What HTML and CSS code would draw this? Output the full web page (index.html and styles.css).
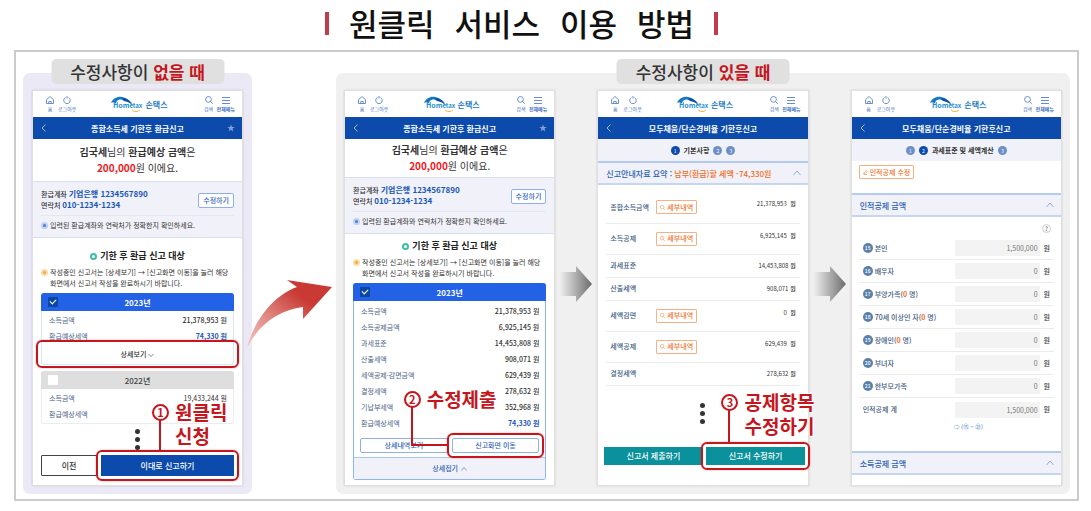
FILE: index.html
```html
<!DOCTYPE html>
<html lang="ko">
<head>
    <meta charset="UTF-8">
    <meta name="viewport" content="width=device-width, initial-scale=1">
    <title>원클릭 서비스 이용 방법</title>
    <link rel="stylesheet" href="styles.css">
</head>
<body>
    <!-- shared icons -->
    <svg class="sprite" aria-hidden="true">
        <symbol id="i-home" viewBox="0 0 16 16"><path d="M1 7.500 8 1l7 6.500V15H1zM5.500 15v-4h5v4" fill="none" stroke="currentColor" stroke-width="1.500"/></symbol>
        <symbol id="i-power" viewBox="0 0 16 16"><path d="M5 3a6.500 6.500 0 1 0 6 0M8 0v5" fill="none" stroke="currentColor" stroke-width="1.500"/></symbol>
        <symbol id="i-search" viewBox="0 0 16 16"><path d="M7 1a5.800 5.800 0 1 0 0 11.600a5.800 5.800 0 1 0 0-11.600M11 11l4.500 4.500" fill="none" stroke="currentColor" stroke-width="1.500"/></symbol>
        <symbol id="i-menu" viewBox="0 0 16 16"><path d="M0 3h16M0 9h16M0 15h16" fill="none" stroke="currentColor" stroke-width="1.600"/></symbol>
        <symbol id="i-up" viewBox="0 0 16 16"><path d="M1 12 8 4l7 8" fill="none" stroke="currentColor" stroke-width="1.600"/></symbol>
        <symbol id="i-down" viewBox="0 0 16 16"><path d="M1 5l7 7 7-7" fill="none" stroke="currentColor" stroke-width="1.600"/></symbol>
        <symbol id="i-back" viewBox="0 0 16 16"><path d="M11 1 4 8l7 7" fill="none" stroke="currentColor" stroke-width="1.800"/></symbol>
        <symbol id="i-star" viewBox="0 0 16 16"><path d="M8 1l2 5h5.500l-4.500 3.500L12.500 15 8 11.500 3.500 15 5 9.500.5 6H6z" fill="currentColor"/></symbol>
        <symbol id="i-pen" viewBox="0 0 16 16"><path d="M3 9 11 1l3 3-8 8-4 1zM3 15h10" fill="none" stroke="currentColor" stroke-width="1.800"/></symbol>
        <symbol id="i-next" viewBox="0 0 32 36">
            <path d="M0 6h16V0l16 18-16 18v-6H0z" fill="url(#grayFade)"/>
        </symbol>
        <symbol id="i-logo" viewBox="0 0 32 16">
            <path d="M0 7C2 2 7 0 11 1c5 1 9 4 11 8-3-3-6-4-9-4-2-2-5-2-7 0L4 8C4 6 2 6 0 7z" fill="#1479c4"/>
            <path d="M11 2c5 0 8 3 10 7-3-3-6-4-8-4z" fill="#0d4fa8"/>
            <path d="M21 14c2 2 6 2 8 0" fill="none" stroke="#f2b441" stroke-width="1"/>
        </symbol>
        <defs>
            <linearGradient id="grayFade"><stop offset="0" stop-color="#eeeeee"/><stop offset="1" stop-color="#6c6c6c"/></linearGradient>
        </defs>
    </svg>

    <h1 class="title"><span>원클릭</span> <span>서비스</span> <span>이용</span> <span>방법</span></h1>

    <main class="frame">
        <section class="panel panel-none">
            <h2 class="panel-label">수정사항이 <strong>없을 때</strong></h2>
            <div class="phone">
                <header class="phone-top">
                    <nav>
                        <button><svg><use href="#i-home"/></svg>홈</button>
                        <button><svg><use href="#i-power"/></svg>로그아웃</button>
                    </nav>
                    <a class="logo" href="#"><svg viewBox="0 0 32 16"><use href="#i-logo"/><text x="2" y="12">Hom<tspan class="logo-tax">etax</tspan></text></svg>손택스</a>
                    <nav class="right">
                        <button><svg><use href="#i-search"/></svg>검색</button>
                        <button class="strong"><svg><use href="#i-menu"/></svg>전체메뉴</button>
                    </nav>
                </header>
                <div class="phone-title">
                    <svg><use href="#i-back"/></svg>
                    <h3>종합소득세 기한후 환급신고</h3>
                    <svg class="star"><use href="#i-star"/></svg>
                </div>
                <p class="refund roomy"><b>김국세</b>님의 <b>환급예상 금액</b>은<br><b class="amount">200,000</b>원 이에요.</p>
                <div class="account">
                    <div class="account-row">
                        <p>환급계좌 <b>기업은행 1234567890</b><br>연락처 <b>010-1234-1234</b></p>
                        <button class="btn-line">수정하기</button>
                    </div>
                    <p class="note blue">입력된 환급계좌와 연락처가 정확한지 확인하세요.</p>
                </div>
                <div class="target roomy">
                    <h4>기한 후 환급 신고 대상</h4>
                    <p class="note orange">작성중인 신고서는 [상세보기] → [신고화면 이동]을 눌러 해당<br>화면에서 신고서 작성을 완료하시기 바랍니다.</p>
                    <div class="card">
                        <div class="card-head">
                            <input type="checkbox" id="year-2023" checked>
                            <label for="year-2023">2023년</label>
                        </div>
                        <table>
                            <tr><th>소득금액</th><td>21,378,953 원</td></tr>
                            <tr><th>환급예상세액</th><td class="total">74,330 원</td></tr>
                        </table>
                        <div class="marked marked-wide">
                            <button class="btn-more">상세보기 <svg><use href="#i-down"/></svg></button>
                        </div>
                    </div>
                    <div class="card card-off">
                        <div class="card-head">
                            <input type="checkbox" id="year-2022">
                            <label for="year-2022">2022년</label>
                        </div>
                        <table>
                            <tr><th>소득금액</th><td>19,433,244 원</td></tr>
                            <tr><th>환급예상세액</th><td></td></tr>
                        </table>
                    </div>
                </div>
                <div class="dots"><i></i><i></i><i></i></div>
                <div class="actions">
                    <button class="btn-prev">이전</button>
                    <div class="marked">
                        <button class="btn-submit">이대로 신고하기</button>
                        <div class="callout callout-1"><span class="num">1</span><p>원클릭<br>신청</p></div>
                    </div>
                </div>
            </div>
        </section>

        <svg class="swoosh" viewBox="0 0 90 72" aria-hidden="true">
            <defs>
                <linearGradient id="redFade" x1="0" y1="1" x2="0.700" y2="0.300">
                    <stop offset="0" stop-color="#f6c9c5"/>
                    <stop offset="0.500" stop-color="#e08983"/>
                    <stop offset="1" stop-color="#c93a34"/>
                </linearGradient>
            </defs>
            <path d="M1 69C7 44 26 17 51 8L41 1 86 8 57 40V28C33 31 13 45 1 69z" fill="url(#redFade)"/>
        </svg>

        <section class="panel panel-edit">
            <h2 class="panel-label">수정사항이 <strong>있을 때</strong></h2>

            <div class="phone">
                <header class="phone-top">
                    <nav>
                        <button><svg><use href="#i-home"/></svg>홈</button>
                        <button><svg><use href="#i-power"/></svg>로그아웃</button>
                    </nav>
                    <a class="logo" href="#"><svg viewBox="0 0 32 16"><use href="#i-logo"/><text x="2" y="12">Hom<tspan class="logo-tax">etax</tspan></text></svg>손택스</a>
                    <nav class="right">
                        <button><svg><use href="#i-search"/></svg>검색</button>
                        <button class="strong"><svg><use href="#i-menu"/></svg>전체메뉴</button>
                    </nav>
                </header>
                <div class="phone-title">
                    <svg><use href="#i-back"/></svg>
                    <h3>종합소득세 기한후 환급신고</h3>
                    <svg class="star"><use href="#i-star"/></svg>
                </div>
                <p class="refund"><b>김국세</b>님의 <b>환급예상 금액</b>은<br><b class="amount">200,000</b>원 이에요.</p>
                <div class="account">
                    <div class="account-row">
                        <p>환급계좌 <b>기업은행 1234567890</b><br>연락처 <b>010-1234-1234</b></p>
                        <button class="btn-line">수정하기</button>
                    </div>
                    <p class="note blue">입력된 환급계좌와 연락처가 정확한지 확인하세요.</p>
                </div>
                <div class="target">
                    <h4>기한 후 환급 신고 대상</h4>
                    <p class="note orange">작성중인 신고서는 [상세보기] → [신고화면 이동]을 눌러 해당<br>화면에서 신고서 작성을 완료하시기 바랍니다.</p>
                    <div class="card card-open">
                        <div class="card-head">
                            <input type="checkbox" id="detail-2023" checked>
                            <label for="detail-2023">2023년</label>
                        </div>
                        <table>
                            <tr><th>소득금액</th><td>21,378,953 원</td></tr>
                            <tr><th>소득공제금액</th><td>6,925,145 원</td></tr>
                            <tr><th>과세표준</th><td>14,453,808 원</td></tr>
                            <tr><th>산출세액</th><td>908,071 원</td></tr>
                            <tr><th>세액공제·감면금액</th><td>629,439 원</td></tr>
                            <tr><th>결정세액</th><td>278,632 원</td></tr>
                            <tr><th>기납부세액</th><td>352,968 원</td></tr>
                            <tr><th>환급예상세액</th><td class="total">74,330 원</td></tr>
                        </table>
                        <div class="card-buttons">
                            <button class="btn-line">상세내역보기</button>
                            <div class="marked">
                                <button class="btn-line">신고화면 이동</button>
                                <div class="callout callout-2"><span class="num">2</span><p>수정제출</p></div>
                            </div>
                        </div>
                        <button class="btn-fold">상세접기 <svg><use href="#i-up"/></svg></button>
                    </div>
                </div>
            </div>

            <svg class="next" aria-hidden="true"><use href="#i-next"/></svg>

            <div class="phone">
                <header class="phone-top">
                    <nav>
                        <button><svg><use href="#i-home"/></svg>홈</button>
                        <button><svg><use href="#i-power"/></svg>로그아웃</button>
                    </nav>
                    <a class="logo" href="#"><svg viewBox="0 0 32 16"><use href="#i-logo"/><text x="2" y="12">Hom<tspan class="logo-tax">etax</tspan></text></svg>손택스</a>
                    <nav class="right">
                        <button><svg><use href="#i-search"/></svg>검색</button>
                        <button class="strong"><svg><use href="#i-menu"/></svg>전체메뉴</button>
                    </nav>
                </header>
                <div class="phone-title">
                    <svg><use href="#i-back"/></svg>
                    <h3>모두채움/단순경비율 기한후신고</h3>
                </div>
                <div class="steps"><span class="step on">1</span><b>기본사항</b><span class="step">2</span><span class="step">3</span></div>
                <div class="fold"><span>신고안내자료 요약 : <em>납부(환급)할 세액 -74,330원</em></span><svg><use href="#i-up"/></svg></div>
                <table class="calc">
                    <tr class="tall"><th>종합소득금액</th><td><button class="btn-detail"><svg><use href="#i-search"/></svg>세부내역</button></td><td>21,378,953 &nbsp;<b>원</b></td></tr>
                    <tr class="tall"><th>소득공제</th><td><button class="btn-detail"><svg><use href="#i-search"/></svg>세부내역</button></td><td>6,925,145 &nbsp;<b>원</b></td></tr>
                    <tr><th>과세표준</th><td></td><td>14,453,808 <b>원</b></td></tr>
                    <tr><th>산출세액</th><td></td><td>908,071 <b>원</b></td></tr>
                    <tr class="tall"><th>세액감면</th><td><button class="btn-detail"><svg><use href="#i-search"/></svg>세부내역</button></td><td>0 &nbsp;<b>원</b></td></tr>
                    <tr class="tall"><th>세액공제</th><td><button class="btn-detail"><svg><use href="#i-search"/></svg>세부내역</button></td><td>629,439 &nbsp;<b>원</b></td></tr>
                    <tr><th>결정세액</th><td></td><td>278,632 <b>원</b></td></tr>
                </table>
                <div class="dots"><i></i><i></i><i></i></div>
                <div class="actions actions-teal">
                    <button class="btn-teal">신고서 제출하기</button>
                    <div class="marked">
                        <button class="btn-teal">신고서 수정하기</button>
                        <div class="callout callout-3"><span class="num">3</span><p>공제항목<br>수정하기</p></div>
                    </div>
                </div>
            </div>

            <svg class="next" aria-hidden="true"><use href="#i-next"/></svg>

            <div class="phone">
                <header class="phone-top">
                    <nav>
                        <button><svg><use href="#i-home"/></svg>홈</button>
                        <button><svg><use href="#i-power"/></svg>로그아웃</button>
                    </nav>
                    <a class="logo" href="#"><svg viewBox="0 0 32 16"><use href="#i-logo"/><text x="2" y="12">Hom<tspan class="logo-tax">etax</tspan></text></svg>손택스</a>
                    <nav class="right">
                        <button><svg><use href="#i-search"/></svg>검색</button>
                        <button class="strong"><svg><use href="#i-menu"/></svg>전체메뉴</button>
                    </nav>
                </header>
                <div class="phone-title">
                    <svg><use href="#i-back"/></svg>
                    <h3>모두채움/단순경비율 기한후신고</h3>
                </div>
                <div class="steps"><span class="step">1</span><span class="step on">2</span><b>과세표준 및 세액계산</b><span class="step">3</span></div>
                <div class="edit-bar"><button class="btn-detail"><svg><use href="#i-pen"/></svg>인적공제 수정</button></div>
                <div class="fold"><span>인적공제 금액</span><svg><use href="#i-up"/></svg></div>
                <div class="form">
                    <button class="help">?</button>
                    <div class="field"><label for="f15"><i>15</i>본인</label><input id="f15" type="text" value="1,500,000" readonly><b>원</b></div>
                    <div class="field"><label for="f16"><i>16</i>배우자</label><input id="f16" type="text" value="0" readonly><b>원</b></div>
                    <div class="field"><label for="f17"><i>17</i>부양가족(<em>0</em> 명)</label><input id="f17" type="text" value="0" readonly><b>원</b></div>
                    <div class="field"><label for="f18"><i>18</i>70세 이상인 자(<em>0</em> 명)</label><input id="f18" type="text" value="0" readonly><b>원</b></div>
                    <div class="field"><label for="f19"><i>19</i>장애인(<em>0</em> 명)</label><input id="f19" type="text" value="0" readonly><b>원</b></div>
                    <div class="field"><label for="f20"><i>20</i>부녀자</label><input id="f20" type="text" value="0" readonly><b>원</b></div>
                    <div class="field"><label for="f21"><i>21</i>한부모가족</label><input id="f21" type="text" value="0" readonly><b>원</b></div>
                    <div class="field"><label for="fsum">인적공제 계</label><input id="fsum" type="text" value="1,500,000" readonly><b>원</b></div>
                    <p class="sum-note">⇨ (⑮ ~ ㉑)</p>
                </div>
                <div class="fold"><span>소득공제 금액</span><svg><use href="#i-up"/></svg></div>
            </div>
        </section>
    </main>
</body>
</html>
```

FILE: styles.css
```css
*, *::before, *::after {
    box-sizing: border-box;
}
body {
    margin: 0;
    padding: 0 12px 12px 14px;
    background: #fff;
    color: #333;
    font-family: "Noto Sans CJK KR", "Noto Sans", sans-serif;
    font-size: 7px;
    line-height: 11px;
}
h1, h2, h3, h4, p {
    margin: 0;
}
button, input {
    margin: 0;
    padding: 0;
    border: 0;
    background: none;
    color: inherit;
    font: inherit;
    white-space: nowrap;
}
button {
    cursor: pointer;
}
em, i {
    font-style: normal;
}
a {
    color: inherit;
    text-decoration: none;
}
svg {
    display: block;
    flex: none;
    width: 8px;
    height: 8px;
}
.sprite {
    position: absolute;
    width: 0;
    height: 0;
}

/* page title */
.title {
    display: flex;
    justify-content: center;
    align-items: center;
    gap: 20px;
    height: 50px;
    padding-bottom: 4px;
    margin-right: 50px;
    color: #111;
    font-size: 31px;
    font-weight: 500;
    line-height: 46px;
}
.title::before,
.title::after {
    content: "";
    width: 4px;
    height: 23px;
    background: #c23b4b;
}

/* frame and panels */
.frame {
    display: grid;
    grid-template-columns: 229fr 84px 734fr;
    padding: 21px 7px 5px;
    border: 2px solid #cbcbcb;
}
.panel {
    display: flex;
    position: relative;
    padding: 17px 8px 8px;
    border-radius: 7px;
    background: #f0f0f0;
}
.panel-none {
    padding: 17px 9px 8px;
    background: #ebe9f6;
}
.panel-label {
    position: absolute;
    top: -14px;
    left: 50%;
    transform: translateX(-50%);
    width: 173px;
    border-radius: 5px;
    background: #e0e0e0;
    color: #333;
    font-size: 17px;
    font-weight: 500;
    line-height: 25px;
    text-align: center;
    white-space: nowrap;
}
.panel-label strong {
    color: #c5161d;
    font-weight: 700;
}
.next {
    align-self: center;
    width: 32px;
    height: 36px;
    margin: 0 5px 8px;
}
.swoosh {
    align-self: start;
    z-index: 1;
    width: 90px;
    height: 72px;
    margin: 206px 0 0 -6px;
}

/* phone */
.phone {
    display: flex;
    flex: 1;
    flex-direction: column;
    min-width: 0;
    border: 1px solid #e0e0e0;
    background: #fff;
    box-shadow: 0 0 2px rgba(0, 0, 0, 0.15);
}
.phone-top {
    display: grid;
    grid-template-columns: 1fr auto 1fr;
    align-items: center;
    height: 26px;
    padding: 0 7px 0 11px;
    color: #3f6fc0;
    font-size: 5px;
    line-height: 7px;
}
.phone-top nav {
    display: flex;
    gap: 2px;
}
.phone-top nav.right {
    justify-content: flex-end;
}
.phone-top button {
    display: flex;
    flex-direction: column;
    align-items: center;
    gap: 1px;
    min-width: 12px;
}
.phone-top .strong {
    font-weight: 700;
}
.logo {
    display: flex;
    align-items: center;
    gap: 2px;
    color: #1b79bd;
    font-size: 8px;
    font-weight: 700;
}
.logo svg {
    width: 32px;
    height: 16px;
}
.logo text {
    fill: #1f8fd0;
    font-size: 7px;
}
.logo .logo-tax {
    font-size: 6px;
}
.phone-title {
    display: flex;
    align-items: center;
    height: 22px;
    padding: 0 7px;
    background: #0c4bab;
    color: #fff;
}
.phone-title h3 {
    flex: 1;
    font-size: 8px;
    font-weight: 700;
    text-align: center;
}
.phone-title svg {
    color: #b9cdee;
}
.phone-title h3:last-child {
    padding-right: 8px;
}
.phone-title .star {
    color: #7ea0d8;
}

/* refund summary */
.refund {
    padding: 3px 0;
    border-bottom: 1px solid #d9dfee;
    font-size: 10px;
    line-height: 16px;
    text-align: center;
}
.refund.roomy {
    padding: 5px 0;
}
.refund .amount {
    color: #f0181e;
}
.account {
    padding: 7px 8px 6px;
    border-bottom: 1px solid #d5e0f2;
    background: #f1f2f9;
}
.account-row {
    display: flex;
    justify-content: space-between;
    align-items: center;
    padding-bottom: 4px;
    margin-bottom: 4px;
    border-bottom: 1px solid #e4e7f0;
    font-weight: 500;
}
.account-row b {
    color: #1a56b8;
    font-size: 8px;
    line-height: 8px;
}
.btn-line {
    height: 15px;
    padding: 0 4px;
    border: 1px solid #8fb0e4;
    border-radius: 2px;
    background: #fff;
    color: #3465b8;
    font-weight: 500;
}
.note {
    position: relative;
    padding-left: 9px;
    white-space: nowrap;
}
.note::before {
    content: "";
    position: absolute;
    top: 2px;
    left: 0;
    width: 7px;
    height: 7px;
    border: 2px solid #bcd0f2;
    border-radius: 50%;
    background: #4b7fd8;
}
.note.orange::before {
    border-color: #fbdba6;
    background: #f2a93b;
}

/* refund target cards */
.target {
    padding: 5px 8px;
}
.target.roomy {
    padding: 11px 8px 0;
}
.target h4 {
    display: flex;
    justify-content: center;
    align-items: center;
    gap: 3px;
    margin-bottom: 4px;
    color: #222;
    font-size: 9px;
    font-weight: 700;
    line-height: 14px;
}
.target h4::before {
    content: "";
    width: 7px;
    height: 7px;
    border: 2px solid #3dbcaa;
    border-radius: 50%;
}
.card {
    margin-top: 4px;
    border: 1px solid #dbe5f7;
    border-top: 0;
    border-radius: 3px;
}
.card-open {
    border-color: #8fb3f3;
}
.card-off {
    margin-top: 6px;
    border-color: #ececec;
}
.card-head {
    display: flex;
    align-items: center;
    height: 18px;
    padding: 0 17px 0 7px;
    margin: 0 -1px;
    border-radius: 3px 3px 0 0;
    background: #2361e6;
    color: #fff;
    font-size: 8px;
    font-weight: 700;
}
.card-head input {
    appearance: none;
    width: 10px;
    height: 10px;
    border-radius: 1px;
    background: #fff;
}
.card-head input:checked {
    background: #0c479f;
}
.card-head input:checked::before {
    content: "";
    display: block;
    width: 6px;
    height: 4px;
    margin: 2px;
    border: solid #fff;
    border-width: 0 0 1px 1px;
    transform: rotate(-45deg);
}
.card-head label {
    flex: 1;
    text-align: center;
}
.card-off .card-head {
    background: #dedede;
    color: #444;
    font-weight: 500;
}
table {
    width: 100%;
    border-collapse: collapse;
}
th, td {
    padding: 0;
    text-align: left;
}
.card table {
    margin: 1px 0;
}
.card-open table {
    margin: 2px 0 3px;
}
.card tr {
    height: 16px;
}
.card th {
    padding-left: 7px;
    color: #4d6488;
    font-weight: 400;
}
.card td {
    padding-right: 6px;
    font-weight: 500;
    text-align: right;
}
.card-off td {
    font-weight: 400;
}
.card td.total {
    color: #1a56b8;
    font-weight: 700;
}
.btn-more {
    display: flex;
    justify-content: center;
    align-items: center;
    gap: 2px;
    width: 100%;
    height: 19px;
    color: #333;
    font-weight: 500;
}
.btn-more svg, .btn-fold svg {
    width: 6px;
    height: 6px;
}
.card-buttons {
    display: grid;
    grid-template-columns: 1fr 1fr;
    gap: 4px;
    padding: 4px 6px;
}
.card-buttons .btn-line {
    display: block;
    width: 100%;
}
.btn-fold {
    display: flex;
    justify-content: center;
    align-items: center;
    gap: 3px;
    width: 100%;
    height: 22px;
    border-top: 1px solid #a9c4f5;
    background: #f1f2f9;
    color: #3465b8;
    font-weight: 500;
}
.dots {
    display: flex;
    flex-direction: column;
    align-items: center;
    gap: 3px;
    padding: 5px 0;
}
.dots i {
    width: 5px;
    height: 5px;
    border-radius: 50%;
    background: #333;
}
.actions {
    display: grid;
    grid-template-columns: 56px 1fr;
    gap: 4px;
    padding: 0 8px 6px;
    font-size: 8px;
    font-weight: 500;
}
.actions button {
    display: block;
    width: 100%;
    height: 21px;
}
.btn-prev {
    border: 1px solid #444;
    border-radius: 1px;
}
.btn-submit {
    background: #0c4bab;
    color: #fff;
}
.actions-teal {
    grid-template-columns: 1fr 1fr;
    padding: 18px 3px 17px 6px;
}
.actions .btn-teal {
    height: 18px;
    background: #0a919b;
    color: #fff;
}

/* red marks and callouts */
.marked {
    position: relative;
}
.marked::after {
    content: "";
    position: absolute;
    inset: -5px;
    border: 2px solid #c5161d;
    border-radius: 6px;
    box-shadow: 0 0 2px rgba(197, 22, 29, 0.4);
    pointer-events: none;
}
.marked-wide::after {
    inset: -5px -6px -4px;
}
.callout {
    display: flex;
    position: absolute;
    z-index: 2;
    gap: 6px;
    color: #c5161d;
    font-size: 19px;
    font-weight: 700;
    line-height: 24px;
    white-space: nowrap;
    text-shadow: 0 0 2px #fff, 1px 1px 1px #fff, -1px -1px 1px #fff;
}
.callout::before {
    content: "";
    position: absolute;
    top: 20px;
    left: 7px;
    border-left: 2px solid #c5161d;
}
.num {
    width: 17px;
    height: 17px;
    margin-top: 4px;
    border: 2px solid #c5161d;
    border-radius: 50%;
    background: #fff;
    font-size: 11px;
    line-height: 13px;
    text-align: center;
}
.callout-1 {
    bottom: 28px;
    left: 51px;
}
.callout-1::before {
    height: 31px;
}
.callout-2 {
    bottom: 42px;
    left: -48px;
}
.callout-2::before {
    width: 37px;
    height: 39px;
    border-bottom: 2px solid #c5161d;
}
.callout-3 {
    bottom: 27px;
    left: 15px;
}
.callout-3::before {
    height: 33px;
}

/* calculation screens */
.steps {
    display: flex;
    justify-content: center;
    align-items: center;
    gap: 4px;
    height: 22px;
    background: #f1f2f9;
    color: #333;
}
.step {
    width: 9px;
    height: 9px;
    border-radius: 50%;
    background: #6d8fc6;
    color: #fff;
    font-size: 5px;
    line-height: 9px;
    text-align: center;
}
.step.on {
    background: #0c4bab;
}
.fold {
    display: flex;
    justify-content: space-between;
    align-items: center;
    height: 24px;
    padding: 0 7px 0 8px;
    border-top: 2px solid #b5cbee;
    border-bottom: 2px solid #c6d6ee;
    background: #f1f2f9;
    color: #2c5fb6;
    font-size: 8px;
    font-weight: 500;
    white-space: nowrap;
}
.fold svg {
    color: #6f95d6;
}
.fold em, .field em {
    color: #f26a21;
}
.field em {
    font-weight: 700;
}
.calc {
    width: auto;
    margin: 7px 8px 12px;
}
.calc tr {
    height: 23px;
    border-bottom: 1px solid #ebebeb;
}
.calc .tall {
    height: 31px;
}
.calc th {
    width: 50px;
    padding-left: 4px;
    color: #405a80;
    font-weight: 500;
}
.calc td:last-child {
    padding-right: 4px;
    font-size: 6px;
    text-align: right;
}
.calc .tall td:last-child {
    padding-bottom: 7px;
}
.calc b {
    font-weight: 500;
}
.btn-detail {
    display: flex;
    align-items: center;
    gap: 2px;
    height: 14px;
    padding: 0 3px;
    border: 1px solid #f5b183;
    border-radius: 1px;
    background: #fff;
    color: #f2711f;
    font-weight: 500;
}
.btn-detail svg {
    width: 5px;
    height: 5px;
}
.edit-bar {
    padding: 4px 7px 14px;
}
.form {
    flex: 1;
    padding: 7px 7px 0;
}
.help {
    display: block;
    width: 9px;
    height: 9px;
    margin: 0 3px 4px auto;
    border: 1px solid #ccc;
    border-radius: 50%;
    font-size: 6px;
    line-height: 7px;
}
.field {
    display: flex;
    align-items: center;
    gap: 4px;
    height: 23px;
    padding: 0 4px;
    border-bottom: 1px solid #ebebeb;
}
.field:nth-last-child(2) {
    border-bottom: 0;
}
.field label {
    display: flex;
    flex: 1;
    align-items: center;
    color: #405a80;
    font-weight: 500;
    white-space: pre;
}
.field label i {
    width: 10px;
    height: 10px;
    margin-right: 2px;
    border-radius: 50%;
    background: #5b80aa;
    color: #fff;
    font-size: 5px;
    line-height: 10px;
    text-align: center;
}
.field input {
    width: 85px;
    height: 16px;
    padding-right: 2px;
    background: #f3f3f3;
    color: #777;
    text-align: right;
}
.field b {
    font-weight: 500;
}
.sum-note {
    padding-left: 95px;
    color: #4b7cc9;
    font-size: 6px;
}
.fold:last-child {
    margin-bottom: 10px;
}
```
